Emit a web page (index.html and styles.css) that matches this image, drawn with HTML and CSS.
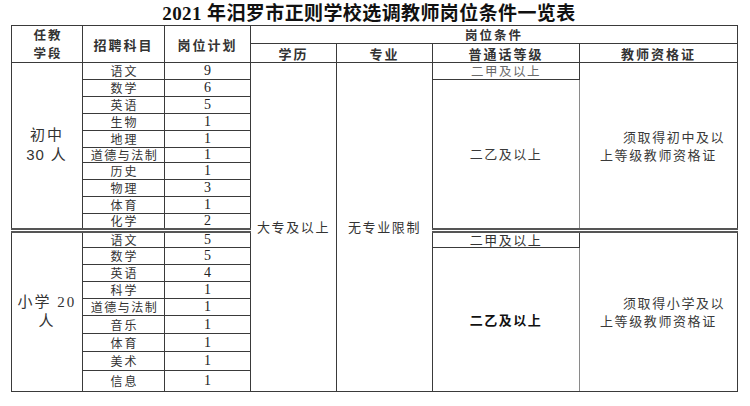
FILE: index.html
```html
<!DOCTYPE html>
<html lang="zh">
<head>
<meta charset="utf-8">
<link rel="stylesheet" href="styles.css">
</head>
<body>
<div class="page">
  <h1 class="title">2021 年汨罗市正则学校选调教师岗位条件一览表</h1>
  <table class="grid">
    <colgroup>
      <col class="c0"><col class="c1"><col class="c2"><col class="c3"><col class="c4"><col class="c5"><col class="c6">
    </colgroup>
    <thead>
      <tr class="h1">
        <th rowspan="2" class="stage-head">任教<br>学段</th>
        <th rowspan="2">招聘科目</th>
        <th rowspan="2">岗位计划</th>
        <th colspan="4" class="cond">岗位条件</th>
      </tr>
      <tr class="h2">
        <th>学历</th>
        <th>专业</th>
        <th>普通话等级</th>
        <th class="gray-l">教师资格证</th>
      </tr>
    </thead>
    <tbody>
      <tr class="r17">
        <td rowspan="10" class="stage sec-end">初中<br><span class="sans">30</span> 人</td>
        <td class="subj">语文</td><td class="num">9</td>
        <td rowspan="19" class="merged">大专及以上</td>
        <td rowspan="19" class="merged">无专业限制</td>
        <td class="lvl light">二甲及以上</td>
        <td rowspan="10" class="cert gray-l sec-end"><span class="ind">须取得初中及以</span><br>上等级教师资格证</td>
      </tr>
      <tr class="r17"><td class="subj">数学</td><td class="num">6</td>
        <td rowspan="9" class="lvl big sec-end">二乙及以上</td></tr>
      <tr class="r17"><td class="subj">英语</td><td class="num">5</td></tr>
      <tr class="r17"><td class="subj">生物</td><td class="num">1</td></tr>
      <tr class="r17"><td class="subj">地理</td><td class="num">1</td></tr>
      <tr class="r14"><td class="subj five">道德与法制</td><td class="num">1</td></tr>
      <tr class="r17"><td class="subj">历史</td><td class="num">1</td></tr>
      <tr class="r17"><td class="subj">物理</td><td class="num">3</td></tr>
      <tr class="r17"><td class="subj">体育</td><td class="num">1</td></tr>
      <tr class="r16"><td class="subj sec-end">化学</td><td class="num sec-end">2</td></tr>

      <tr class="r17">
        <td rowspan="9" class="stage">小学 20<br>人</td>
        <td class="subj">语文</td><td class="num">5</td>
        <td class="lvl">二甲及以上</td>
        <td rowspan="9" class="cert gray-l"><span class="ind">须取得小学及以</span><br>上等级教师资格证</td>
      </tr>
      <tr class="r17"><td class="subj">数学</td><td class="num">5</td>
        <td rowspan="8" class="lvl bold">二乙及以上</td></tr>
      <tr class="r17"><td class="subj">英语</td><td class="num">4</td></tr>
      <tr class="r17"><td class="subj">科学</td><td class="num">1</td></tr>
      <tr class="r17"><td class="subj five">道德与法制</td><td class="num">1</td></tr>
      <tr class="r18"><td class="subj">音乐</td><td class="num">1</td></tr>
      <tr class="r18"><td class="subj">体育</td><td class="num">1</td></tr>
      <tr class="r19"><td class="subj">美术</td><td class="num">1</td></tr>
      <tr class="r21"><td class="subj">信息</td><td class="num">1</td></tr>
    </tbody>
  </table>
</div>
</body>
</html>
```

FILE: styles.css
```css
html, body {
  margin: 0;
  padding: 0;
  background: #ffffff;
}
body {
  font-family: "Liberation Serif", "Noto Sans CJK SC", serif;
  color: #222;
}
.page {
  width: 750px;
  height: 406px;
  overflow: hidden;
}
.title {
  margin: 0;
  height: 25px;
  line-height: 27px;
  font-size: 19px;
  font-weight: 700;
  text-align: center;
  color: #111;
  padding-right: 12px;
  letter-spacing: 0.4px;
}
.grid {
  margin-left: 11px;
  width: 726px;
  table-layout: fixed;
  border-collapse: collapse;
}
.c0 { width: 71px; }
.c1 { width: 82px; }
.c2 { width: 86px; }
.c3 { width: 86px; }
.c4 { width: 96px; }
.c5 { width: 147px; }
.c6 { width: 158px; }

.grid th, .grid td {
  border: 1px solid #3a3a3a;
  padding: 0;
  text-align: center;
  vertical-align: middle;
  overflow: hidden;
  white-space: nowrap;
}
.grid th {
  font-family: "Noto Sans CJK SC", sans-serif;
  font-size: 13px;
  font-weight: 700;
  color: #333;
  letter-spacing: 2px;
  line-height: 17px;
}
.grid th.stage-head {
  font-size: 12.5px;
  line-height: 18px;
  padding-left: 2px;
}
.h1 { height: 18px; }
.h2 { height: 19px; }
.grid th.cond { font-size: 12.5px; }

.r14 { height: 14px; }
.r16 { height: 16px; }
.r17 { height: 17px; }
.r18 { height: 18px; }
.r19 { height: 19px; }
.r21 { height: 21px; }

.grid td {
  font-family: "Noto Sans CJK SC", sans-serif;
  font-size: 12px;
  line-height: 14px;
  color: #333;
}
.grid td.subj {
  letter-spacing: 2px;
  padding-left: 2px;
}
.grid td.subj.five {
  letter-spacing: 1.5px;
}
.grid td.num {
  font-family: "Liberation Serif", serif;
  font-size: 14px;
  color: #222;
}
.grid td.stage {
  font-size: 15px;
  line-height: 19px;
  letter-spacing: 2px;
  color: #333;
  font-family: "Liberation Serif", "Noto Sans CJK SC", serif;
}
.sans {
  font-family: "Liberation Sans", sans-serif;
  letter-spacing: 1px;
}
.grid td.merged {
  font-size: 13px;
  letter-spacing: 1.6px;
  color: #333;
}
.grid td.lvl {
  font-size: 13px;
  letter-spacing: 1.5px;
}
.grid td.lvl.light {
  color: #6a6a6a;
  font-size: 12.5px;
}
.grid td.lvl.big {
  color: #3a3a3a;
}
.grid td.lvl.bold {
  font-weight: 700;
  color: #111;
}
.grid td.cert {
  text-align: left;
  white-space: normal;
  font-size: 13px;
  line-height: 18px;
  letter-spacing: 1.6px;
  color: #3a3a3a;
  padding-left: 20px;
  padding-right: 8px;
}
.ind {
  padding-left: 23px;
}
.gray-l {
  border-left-color: #8a8a8a !important;
}
.grid td.sec-end {
  border-bottom: 5px double #555;
}
```
